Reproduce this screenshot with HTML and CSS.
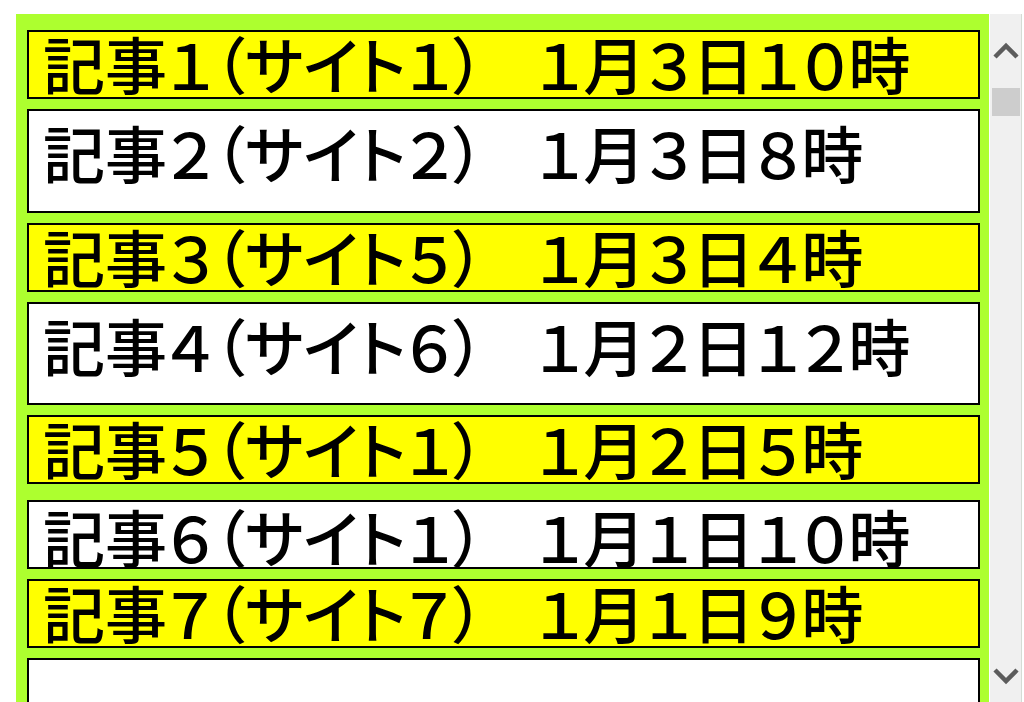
FILE: index.html
```html
<!DOCTYPE html>
<html lang="ja">
	<head>
		<meta charset="utf-8">
		<title>記事一覧</title>
		<link rel="stylesheet" href="styles.css">
	</head>
	<body>
		<div class="frame">
			<div class="list">
				<div class="item new">記事１（サイト１）<span class="gap">　</span>１月３日１０時</div>
				<div class="item tall">記事２（サイト２）<span class="gap">　</span>１月３日８時</div>
				<div class="item new">記事３（サイト５）<span class="gap">　</span>１月３日４時</div>
				<div class="item tall short">記事４（サイト６）<span class="gap">　</span>１月２日１２時</div>
				<div class="item new">記事５（サイト１）<span class="gap">　</span>１月２日５時</div>
				<div class="item shifted">記事６（サイト１）<span class="gap">　</span>１月１日１０時</div>
				<div class="item new">記事７（サイト７）<span class="gap">　</span>１月１日９時</div>
				<div class="item"></div>
			</div>
			<div class="scrollbar">
				<div class="arrow up">
					<svg width="26" height="20" viewBox="0 0 26 20"><polyline points="2,16 13,5 24,16" /></svg>
				</div>
				<div class="thumb"></div>
				<div class="arrow down">
					<svg width="26" height="20" viewBox="0 0 26 20"><polyline points="2,4 13,15 24,4" /></svg>
				</div>
			</div>
		</div>
	</body>
</html>
```

FILE: styles.css
```css
html, body {
	margin: 0;
	height: 100%;
	overflow: hidden;
	background: #fff;
}

body {
	font-family: "Noto Sans CJK JP", "Noto Sans", sans-serif;
}

.frame {
	display: flex;
	margin: 14px 0 0 16px;
	height: 700px;
}

.list {
	width: 973px;
	box-sizing: border-box;
	padding: 16px 9px 0 11px;
	background: #adff2f;
}

.item {
	box-sizing: border-box;
	height: 69px;
	margin-bottom: 10px;
	padding: 0 0 0 14px;
	border: 2px solid #000;
	background: #fff;
	font-size: 62px;
	font-weight: 500;
	line-height: 1;
	white-space: nowrap;
	overflow: hidden;
	font-feature-settings: "palt";
}

.item .gap {
	letter-spacing: -10px;
}

.item.new {
	background: #ffff00;
}

.item.tall {
	height: 104px;
	padding-top: 10px;
}

.item.short {
	height: 103px;
}

.item.shifted {
	margin-top: 16px;
	padding-top: 3px;
}

.scrollbar {
	display: flex;
	flex-direction: column;
	width: 31px;
	margin-left: 1px;
	background: #f0f0f0;
	border-right: 1px solid #d4dcd4;
}

.arrow {
	display: flex;
	align-items: center;
	justify-content: center;
	height: 74px;
}

.arrow.down {
	margin-top: auto;
	height: 56px;
	margin-bottom: 10px;
}

.arrow polyline {
	fill: none;
	stroke: #5c5c5c;
	stroke-width: 4.5;
}

.thumb {
	height: 28px;
	margin: 0 1px 0 2px;
	background: #cdcdcd;
}
```
